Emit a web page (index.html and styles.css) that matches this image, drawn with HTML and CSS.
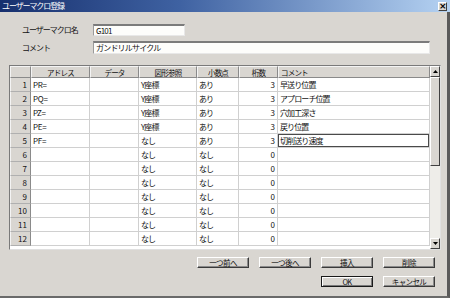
FILE: index.html
```html
<!DOCTYPE html>
<html lang="ja">
<head>
<meta charset="utf-8">
<title>ユーザーマクロ登録</title>
<link rel="stylesheet" href="styles.css">
</head>
<body>
<div class="window">
  <div class="titlebar">
    <span class="title">ユーザーマクロ登録</span>
    <span class="close">×</span>
  </div>
  <div class="form">
    <div class="field">
      <span class="label">ユーザーマクロ名</span>
      <span class="input short">G101</span>
    </div>
    <div class="field">
      <span class="label">コメント</span>
      <span class="input long">ガンドリルサイクル</span>
    </div>
  </div>
  <div class="grid">
    <table class="sheet">
      <colgroup>
        <col class="c-num"><col class="c-addr"><col class="c-data"><col class="c-ref"><col class="c-dec"><col class="c-dig"><col class="c-cmt">
      </colgroup>
      <thead>
        <tr><th></th><th>アドレス</th><th>データ</th><th>図形参照</th><th>小数点</th><th>桁数</th><th class="left">コメント</th></tr>
      </thead>
      <tbody>
        <tr><td class="num">1</td><td class="addr">PR=</td><td></td><td>Y座標</td><td>あり</td><td class="r">3</td><td>早送り位置</td></tr>
        <tr><td class="num">2</td><td class="addr">PQ=</td><td></td><td>Y座標</td><td>あり</td><td class="r">3</td><td>アプローチ位置</td></tr>
        <tr><td class="num">3</td><td class="addr">PZ=</td><td></td><td>Y座標</td><td>あり</td><td class="r">3</td><td>穴加工深さ</td></tr>
        <tr><td class="num">4</td><td class="addr">PE=</td><td></td><td>Y座標</td><td>あり</td><td class="r">3</td><td>戻り位置</td></tr>
        <tr><td class="num">5</td><td class="addr">PF=</td><td></td><td>なし</td><td>あり</td><td class="r">3</td><td class="focus">切削送り速度</td></tr>
        <tr><td class="num">6</td><td></td><td></td><td>なし</td><td>なし</td><td class="r">0</td><td></td></tr>
        <tr><td class="num">7</td><td></td><td></td><td>なし</td><td>なし</td><td class="r">0</td><td></td></tr>
        <tr><td class="num">8</td><td></td><td></td><td>なし</td><td>なし</td><td class="r">0</td><td></td></tr>
        <tr><td class="num">9</td><td></td><td></td><td>なし</td><td>なし</td><td class="r">0</td><td></td></tr>
        <tr><td class="num">10</td><td></td><td></td><td>なし</td><td>なし</td><td class="r">0</td><td></td></tr>
        <tr><td class="num">11</td><td></td><td></td><td>なし</td><td>なし</td><td class="r">0</td><td></td></tr>
        <tr><td class="num">12</td><td></td><td></td><td>なし</td><td>なし</td><td class="r">0</td><td></td></tr>
      </tbody>
    </table>
    <div class="scrollbar">
      <div class="sb-btn"><svg width="5" height="3" viewBox="0 0 5 3"><path d="M2.5 0 L5 3 L0 3 Z" fill="#000"/></svg></div>
      <div class="sb-thumb"></div>
      <div class="sb-track"></div>
      <div class="sb-btn"><svg width="5" height="3" viewBox="0 0 5 3"><path d="M0 0 L5 0 L2.5 3 Z" fill="#000"/></svg></div>
    </div>
  </div>
  <div class="buttons">
    <span class="btn">一つ前へ</span>
    <span class="btn">一つ後へ</span>
    <span class="btn">挿入</span>
    <span class="btn">削除</span>
    <span class="btn default b-ok">OK</span>
    <span class="btn">キャンセル</span>
  </div>
</div>
</body>
</html>
```
FILE: styles.css
```css
* { box-sizing: border-box; }
html, body { margin: 0; padding: 0; }
body {
  width: 450px;
  height: 298px;
  overflow: hidden;
  font-family: "Noto Sans CJK JP", "Liberation Sans", sans-serif;
  font-size: 8px;
  color: #111;
  background: #d9d6d1;
}
.window {
  width: 450px;
  height: 298px;
  background: #d9d6d1;
  border-right: 3px solid #5a5a5a;
  border-bottom: 2px solid #6a6a6a;
  display: flex;
  flex-direction: column;
}
.titlebar {
  height: 12px;
  flex: none;
  background: linear-gradient(to right, #17306e 0%, #3f62a2 40%, #b5d2f2 100%);
  display: flex;
  align-items: center;
  justify-content: space-between;
  padding: 0 2px 0 2px;
  margin-right: -3px;
}
.title {
  color: #fff;
  font-size: 8px;
  line-height: 12px;
  letter-spacing: -1.1px;
  white-space: nowrap;
}
.close {
  width: 9px;
  height: 9px;
  background: #d9d6d1;
  border: 1px solid;
  border-color: #fff #404040 #404040 #fff;
  font-size: 9px;
  line-height: 7px;
  text-align: center;
  font-weight: bold;
  font-family: "DejaVu Sans", sans-serif;
  color: #000;
  margin-right: 1px;
}
.form {
  padding: 12px 0 0 22px;
  display: flex;
  flex-direction: column;
  gap: 5px;
}
.field {
  display: flex;
  align-items: center;
}
.label {
  width: 71px;
  font-size: 8px;
  letter-spacing: -1px;
  white-space: nowrap;
  line-height: 12px;
}
.input {
  height: 12px;
  background: #fdfdfb;
  border-top: 2px solid #7b7b7b;
  border-left: 1px solid #9a9a9a;
  border-right: 1px solid #e8e8e8;
  border-bottom: 1px solid #e8e8e8;
  font-size: 8px;
  letter-spacing: -0.8px;
  line-height: 9px;
  padding-left: 2px;
  white-space: nowrap;
}
.input.short { width: 92px; }
.input.long { width: 337px; height: 13px; }
.grid {
  margin: 11px 0 0 9px;
  width: 432px;
  height: 185px;
  flex: none;
  border: 1px solid #7a7a7a;
  border-right-color: #e0e0e0;
  border-bottom-color: #e0e0e0;
  background: #fff;
  display: flex;
  overflow: hidden;
}
.sheet {
  width: 420px;
  table-layout: fixed;
  border-collapse: separate;
  border-spacing: 0;
  align-self: flex-start;
}
.c-num { width: 21px; }
.c-addr { width: 59px; }
.c-data { width: 49px; }
.c-ref { width: 58px; }
.c-dec { width: 42px; }
.c-dig { width: 39px; }
.c-cmt { width: 152px; }
.sheet th {
  height: 12px;
  background: #d9d6d1;
  font-weight: normal;
  font-size: 7.5px;
  letter-spacing: -0.8px;
  padding: 0;
  text-align: center;
  border-right: 1px solid #8a8a8a;
  border-bottom: 1px solid #8a8a8a;
  border-top: 1px solid #f4f4f4;
  border-left: 1px solid #f4f4f4;
  line-height: 9px;
  white-space: nowrap;
  overflow: hidden;
}
.sheet th.left { text-align: left; padding-left: 2px; }
.sheet td {
  height: 14px;
  padding: 0 2px;
  font-size: 8px;
  letter-spacing: -0.9px;
  line-height: 12px;
  border-right: 1px solid #d0d0d0;
  border-bottom: 1px solid #d0d0d0;
  white-space: nowrap;
  overflow: hidden;
}
.sheet td.addr { letter-spacing: -0.3px; }
.sheet td.num {
  background: #d9d6d1;
  text-align: right;
  padding-right: 3px;
  letter-spacing: 0;
  border-right: 1px solid #8a8a8a;
  border-bottom: 1px solid #b0b0b0;
  border-left: 1px solid #f4f4f4;
}
.sheet td.r { text-align: right; padding-right: 2px; letter-spacing: 0; }
.sheet td.focus { box-shadow: inset 0 0 0 1px #4a4a4a; }
.scrollbar {
  width: 10px;
  flex: none;
  display: flex;
  flex-direction: column;
  background: #ecebe8;
}
.sb-btn {
  height: 11px;
  flex: none;
  background: #d9d6d1;
  border: 1px solid;
  border-color: #fff #404040 #404040 #fff;
  display: flex;
  align-items: center;
  justify-content: center;
}
.sb-thumb {
  height: 89px;
  flex: none;
  background: #d9d6d1;
  border: 1px solid;
  border-color: #fff #404040 #404040 #fff;
}
.sb-track {
  flex: 1;
  background: #eeede9;
}
.buttons {
  margin: 7px 12px 0 auto;
  display: grid;
  grid-template-columns: repeat(4, 52px);
  grid-auto-rows: 11px;
  column-gap: 10px;
  row-gap: 8px;
}
.btn {
  height: 11px;
  background: #d9d6d1;
  border: 1px solid;
  border-color: #fff #3a3a3a #3a3a3a #fff;
  box-shadow: inset -1px -1px 0 #8a8a8a;
  font-size: 7.5px;
  letter-spacing: -0.6px;
  line-height: 9px;
  text-align: center;
  white-space: nowrap;
}
.b-ok { grid-column: 3; }
.btn.default {
  border: 1px solid #1a1a1a;
  box-shadow: inset 1px 1px 0 #fff, inset -1px -1px 0 #7a7a7a;
}
```
